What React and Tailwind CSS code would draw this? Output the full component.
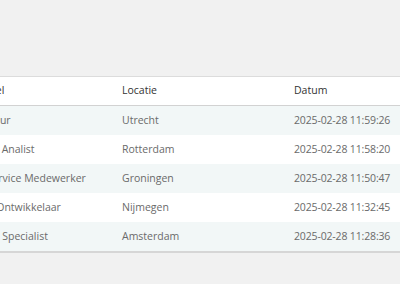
import React from "react";

const rows = [
  { titel: "ICT Adviseur", locatie: "Utrecht", datum: "2025-02-28 11:59:26" },
  { titel: "Financieel Analist", locatie: "Rotterdam", datum: "2025-02-28 11:58:20" },
  { titel: "Klantenservice Medewerker", locatie: "Groningen", datum: "2025-02-28 11:50:47" },
  { titel: "Software Ontwikkelaar", locatie: "Nijmegen", datum: "2025-02-28 11:32:45" },
  { titel: "Marketing Specialist", locatie: "Amsterdam", datum: "2025-02-28 11:28:36" },
];

export default function App() {
  return (
    <div className="h-[284px] w-[400px] overflow-hidden bg-[#f1f1f1] pt-[76px] font-['Open_Sans',sans-serif] text-[10.5px]">
      <div className="-ml-[62px] w-[560px] border-t border-[#dcdcdc] border-b-2 border-b-[#d6d6d6] bg-white">
        <div className="grid h-[29px] grid-cols-[172px_172px_1fr] items-center border-b border-[#d2d2d2] text-[#333]">
          <div className="pl-3">Functietitel</div>
          <div className="pl-3">Locatie</div>
          <div className="pl-3">Datum</div>
        </div>
        {rows.map((r, i) => (
          <div
            key={i}
            className={
              "grid h-[29px] grid-cols-[172px_172px_1fr] items-center text-[#6a6a6a] " +
              (i % 2 === 0 ? "bg-[#f2f7f7]" : "bg-white")
            }
          >
            <div className="whitespace-nowrap pl-3">{r.titel}</div>
            <div className="pl-3">{r.locatie}</div>
            <div className="pl-3 tracking-[-0.15px]">{r.datum}</div>
          </div>
        ))}
      </div>
    </div>
  );
}
